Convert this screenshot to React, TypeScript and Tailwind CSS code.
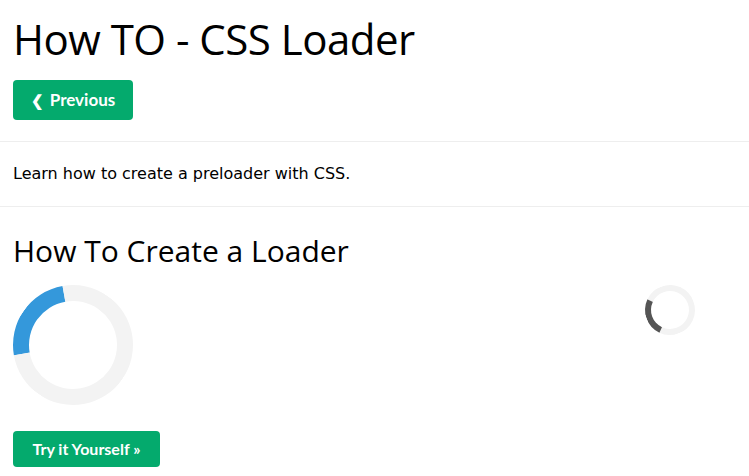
export default function App() {
  return (
    <div className="min-h-[476px] bg-white px-[13px] text-black">
      <h1 className="mt-[11px] mb-[13px] font-['Open_Sans',sans-serif] text-[42px] leading-[56px] font-normal tracking-[-0.5px]">
        How TO - CSS Loader
      </h1>
      <button className="flex h-[40px] w-[120px] items-center justify-center rounded-[4px] bg-[#04AA6D] font-['Lato',sans-serif] text-[17px] font-bold text-white">
        <span className="mr-[6px] text-[15px]">❮</span>Previous
      </button>
      <hr className="-mx-[13px] mt-[21px] border-t border-[#eeeeee]" />
      <p className="flex h-[64px] items-center font-['DejaVu_Sans',sans-serif] text-[16px]">
        Learn how to create a preloader with CSS.
      </p>
      <hr className="-mx-[13px] border-t border-[#eeeeee]" />
      <h2 className="mt-[24px] font-['Open_Sans',sans-serif] text-[30px] leading-[40px] font-normal">
        How To Create a Loader
      </h2>
      <div className="mt-[14px] flex items-start">
        <div className="h-[120px] w-[120px] rotate-[-55deg] rounded-full border-[16px] border-[#f3f3f3] border-t-[#3498db]" />
        <div className="mr-[41px] ml-auto h-[50px] w-[50px] rotate-[-20deg] rounded-full border-[6px] border-[#f3f3f3] border-l-[#555555]" />
      </div>
      <button className="mt-[26px] flex h-[36px] w-[147px] items-center justify-center rounded-[4px] bg-[#04AA6D] font-['Lato',sans-serif] text-[16px] font-bold text-white">
        Try it Yourself »
      </button>
    </div>
  )
}
